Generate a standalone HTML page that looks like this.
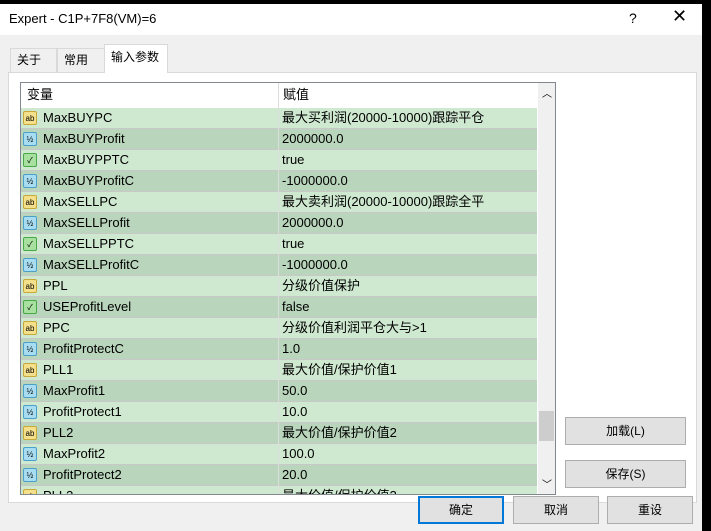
<!DOCTYPE html><html><head><meta charset="utf-8"><style>
*{box-sizing:border-box;margin:0;padding:0}
body{width:711px;height:531px;background:#000;position:relative;overflow:hidden;font-family:"Liberation Sans","Noto Sans CJK SC",sans-serif;font-size:12px;color:#000}
.dlg{position:absolute;left:0;top:4px;width:702px;height:527px;background:#f0f0f0}
.title{position:absolute;left:0;top:0;width:702px;height:31px;background:#fff;font-size:13px}
.tab{position:absolute;top:44px;height:25px;border:1px solid #d9d9d9;border-bottom:none;background:#f0f0f0;padding:0 0 0 6px;line-height:22px;font-size:12px}
.panel{position:absolute;left:8px;top:68px;width:689px;height:431px;background:#fff;border:1px solid #d9d9d9}
.tbl{position:absolute;left:20px;top:78px;width:536px;height:413px;border:1px solid #828790;overflow:hidden;background:#fff}
.hdr{position:absolute;left:0;top:0;height:25px;width:516px;background:#fff;font-size:13px}
.row{position:absolute;left:0;width:516px;height:21px;border-bottom:1px solid #c8c8c8;font-size:13px}
.row span{position:absolute;top:0;line-height:20px;height:20px}
.n{left:22px}.v{left:261px}
.sep{position:absolute;left:257px;top:0;width:1px;height:413px;background:#ddd}
.ic{position:absolute;left:2px;top:3px;width:14px;height:14px;border-radius:2px;font-size:8px;line-height:13px;text-align:center}
.ab{background:#f4e08a;border:1px solid #c8a838}
.hf{background:#a8dcf0;border:1px solid #4aa0c8}
.bo{background:#a8e0a0;border:1px solid #48a848}
.sb{position:absolute;left:517px;top:0;width:17px;height:411px;background:#f0f0f0}
.btn{position:absolute;height:28px;background:#e1e1e1;border:1px solid #adadad;text-align:center;line-height:26px;font-size:12px}
</style></head><body>
<div style="position:absolute;left:540px;top:0;width:150px;height:4px;background:#000"></div>
<div class="dlg">
<div class="title"><span style="position:absolute;left:9px;top:7px">Expert - C1P+7F8(VM)=6</span><span style="position:absolute;left:629px;top:6px;font-size:14px">?</span><span style="position:absolute;left:672px;top:2px;font-size:18px">✕</span></div>
<div class="tab" style="left:10px;width:47px">关于</div>
<div class="tab" style="left:57px;width:48px">常用</div>
<div class="panel"></div>
<div class="tab" style="left:104px;top:40px;height:29px;width:64px;background:#fff;line-height:24px">输入参数</div>
<div class="tbl">
<div class="hdr"><span style="position:absolute;left:6px;top:2px;line-height:20px">变量</span><span style="position:absolute;left:262px;top:2px;line-height:20px">赋值</span></div>
<div id="rows"></div>
<div class="sep"></div>
<div class="sb"><span style="position:absolute;left:4px;top:2px;font-size:10px">︿</span><div style="position:absolute;left:1px;top:328px;width:15px;height:30px;background:#cdcdcd"></div><span style="position:absolute;left:4px;top:393px;font-size:10px">﹀</span></div>
</div>
<div class="btn" style="left:565px;top:413px;width:121px">加载(L)</div>
<div class="btn" style="left:565px;top:456px;width:121px">保存(S)</div>
<div class="btn" style="left:418px;top:492px;width:86px;border:2px solid #0078d7;line-height:24px">确定</div>
<div class="btn" style="left:513px;top:492px;width:86px">取消</div>
<div class="btn" style="left:607px;top:492px;width:86px">重设</div>
</div>
<script>
var d=[["ab","MaxBUYPC","最大买利润(20000-10000)跟踪平仓"],["hf","MaxBUYProfit","2000000.0"],["bo","MaxBUYPPTC","true"],["hf","MaxBUYProfitC","-1000000.0"],["ab","MaxSELLPC","最大卖利润(20000-10000)跟踪全平"],["hf","MaxSELLProfit","2000000.0"],["bo","MaxSELLPPTC","true"],["hf","MaxSELLProfitC","-1000000.0"],["ab","PPL","分级价值保护"],["bo","USEProfitLevel","false"],["ab","PPC","分级价值利润平仓大与>1"],["hf","ProfitProtectC","1.0"],["ab","PLL1","最大价值/保护价值1"],["hf","MaxProfit1","50.0"],["hf","ProfitProtect1","10.0"],["ab","PLL2","最大价值/保护价值2"],["hf","MaxProfit2","100.0"],["hf","ProfitProtect2","20.0"],["ab","PLL3","最大价值/保护价值3"]];
var h="";d.forEach(function(r,i){var t={ab:"ab",hf:"½",bo:"✓"}[r[0]];h+='<div class="row" style="top:'+(25+i*21)+'px;background:'+(i%2?'#b9d5bb':'#cfe8d0')+'"><div class="ic '+r[0]+'">'+t+'</div><span class="n">'+r[1]+'</span><span class="v">'+r[2]+'</span></div>'});
document.getElementById("rows").innerHTML=h;
</script>
</body></html>
